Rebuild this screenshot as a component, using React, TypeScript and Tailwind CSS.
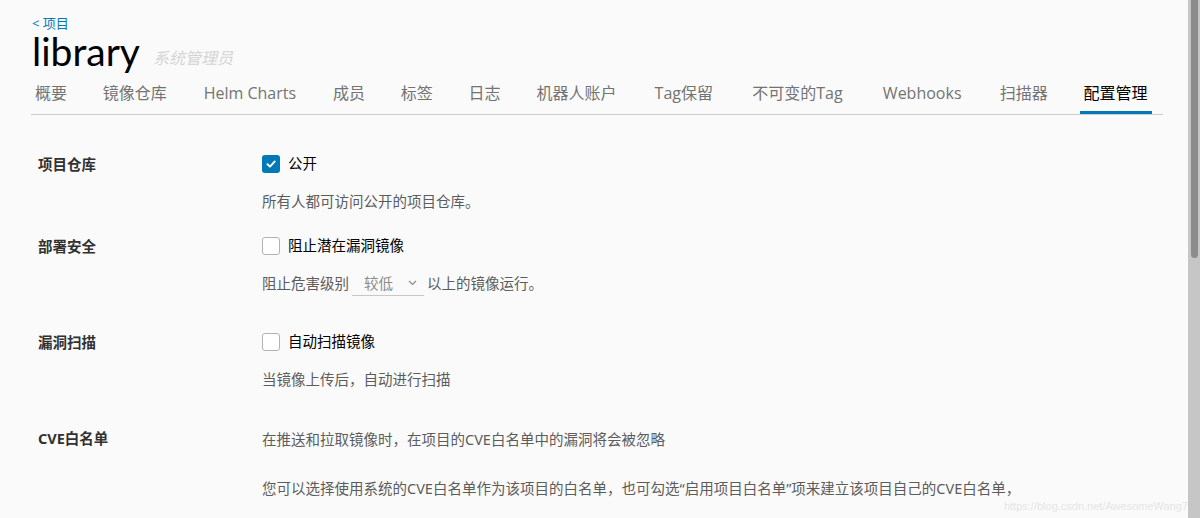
import React from "react";

const latin = '"Open Sans", "Noto Sans CJK SC", sans-serif';
const cjk = '"Noto Sans", "Noto Sans CJK SC", sans-serif';

const tabs: { t: string; w: string }[] = [
  { t: "概要", w: "w-[40px]" },
  { t: "镜像仓库", w: "w-[72px]" },
  { t: "Helm Charts", w: "w-[103px]" },
  { t: "成员", w: "w-[40px]" },
  { t: "标签", w: "w-[40px]" },
  { t: "日志", w: "w-[40px]" },
  { t: "机器人账户", w: "w-[89px]" },
  { t: "Tag保留", w: "w-[70px]" },
  { t: "不可变的Tag", w: "w-[102px]" },
  { t: "Webhooks", w: "w-[92px]" },
  { t: "扫描器", w: "w-[56px]" },
  { t: "配置管理", w: "w-[72px]" },
];

function Checkbox({ checked }: { checked?: boolean }) {
  if (checked) {
    return (
      <span className="flex h-[18px] w-[18px] items-center justify-center rounded-[3px] bg-[#0079b8]">
        <svg width="12" height="12" viewBox="0 0 12 12">
          <path d="M2.5 6.2 L5 8.6 L9.6 3.6" fill="none" stroke="#fff" strokeWidth="2" strokeLinecap="round" strokeLinejoin="round" />
        </svg>
      </span>
    );
  }
  return <span className="block h-[18px] w-[18px] rounded-[3px] border border-[#b3b3b3] bg-white" />;
}

function Row({ label, children, labelClass = "" }: { label: string; children: React.ReactNode; labelClass?: string }) {
  return (
    <div className="flex">
      <div className={"w-[230px] pl-[6px] text-[14.5px] font-bold text-[#313131] " + labelClass}>{label}</div>
      <div className="flex flex-col">{children}</div>
    </div>
  );
}

export default function App() {
  return (
    <div className="flex h-[518px] w-[1200px] overflow-hidden bg-[#fafafa]" style={{ fontFamily: cjk }}>
      <div className="relative flex-1 pl-[32px] pr-[25px]">
        <div className="pt-[15px]">
          <div className="flex h-[16px] items-center text-[13px] leading-[16px] text-[#0079b8]">&lt; 项目</div>
          <div className="flex h-[40px] items-end">
            <span className="text-[39px] leading-[40px] text-[#000]" style={{ fontFamily: '"Lato", sans-serif' }}>library</span>
            <span className="mb-[2px] ml-[13px] text-[16px] leading-[22px] italic text-[#d4d4d4]">系统管理员</span>
          </div>
        </div>
        <div className="ml-[-1px] mt-[7px] flex h-[37px] gap-[27.7px] border-b border-[#cccccc]">
          {tabs.map(({ t, w }, i) => {
            const active = i === tabs.length - 1;
            return (
              <div
                key={t}
                className={
                  "flex h-full shrink-0 justify-center whitespace-nowrap pt-[4px] text-[16px] leading-[22px] " +
                  w +
                  " " +
                  (active ? "border-b-[3px] border-[#0079b8] text-[#000]" : "text-[#737373]")
                }
                style={{ fontFamily: latin }}
              >
                {t}
              </div>
            );
          })}
        </div>

        <div className="mt-[37px]">
          <Row label="项目仓库" labelClass="leading-[24px]">
            <div className="flex h-[24px] items-center gap-[8px]">
              <Checkbox checked />
              <span className="text-[14.5px] text-[#000]">公开</span>
            </div>
            <div className="mt-[14px] flex h-[24px] items-center text-[14.5px] text-[#5c5c5c]">所有人都可访问公开的项目仓库。</div>
          </Row>
          <div className="mt-[20px]">
            <Row label="部署安全" labelClass="leading-[24px]">
              <div className="flex h-[24px] items-center gap-[8px]">
                <Checkbox />
                <span className="text-[14.5px] text-[#000]">阻止潜在漏洞镜像</span>
              </div>
              <div className="mt-[14px] flex h-[24px] items-center text-[14.5px] text-[#5c5c5c]">
                <span>阻止危害级别</span>
                <span className="relative mx-[3px] flex h-[24px] w-[72px] items-center border-b border-[#c8c8c8] pl-[12px] text-[#8a8a8a]">
                  较低
                  <svg className="absolute right-[7px] top-[8px]" width="9" height="6" viewBox="0 0 9 6">
                    <path d="M1 1 L4.5 4.5 L8 1" fill="none" stroke="#8a8a8a" strokeWidth="1.2" />
                  </svg>
                </span>
                <span>以上的镜像运行。</span>
              </div>
            </Row>
          </div>
          <div className="mt-[34px]">
            <Row label="漏洞扫描" labelClass="leading-[24px]">
              <div className="flex h-[24px] items-center gap-[8px]">
                <Checkbox />
                <span className="text-[14.5px] text-[#000]">自动扫描镜像</span>
              </div>
              <div className="mt-[14px] flex h-[24px] items-center text-[14.5px] text-[#5c5c5c]">当镜像上传后，自动进行扫描</div>
            </Row>
          </div>
          <div className="mt-[36px]">
            <Row label="CVE白名单" labelClass="leading-[20px]">
              <div className="flex h-[24px] items-center text-[14.5px] text-[#5c5c5c]">在推送和拉取镜像时，在项目的CVE白名单中的漏洞将会被忽略</div>
              <div className="mt-[25px] flex h-[24px] items-center text-[14.5px] text-[#5c5c5c]">
                您可以选择使用系统的CVE白名单作为该项目的白名单，也可勾选“启用项目白名单”项来建立该项目自己的CVE白名单，
              </div>
            </Row>
          </div>
        </div>

        <div className="absolute bottom-[4px] right-[0px] text-[11px] text-[#e6e6e6]" style={{ fontFamily: '"Liberation Sans", sans-serif' }}>
          https://blog.csdn.net/AwesomeWang7
        </div>
      </div>
      <div className="flex w-[12px] justify-center bg-[#c6c6c6]">
        <div className="h-[258px] w-[7px] rounded-b-[4px] bg-[#8c8c8c]" />
      </div>
    </div>
  );
}
